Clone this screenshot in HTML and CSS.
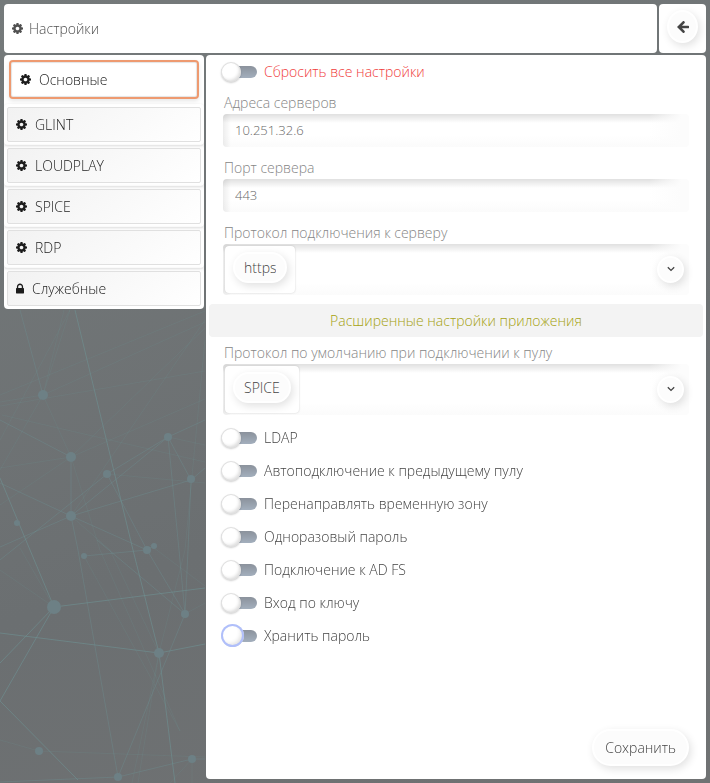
FILE: index.html
```html
<!DOCTYPE html>
<html lang="ru">
<head>
    <meta charset="UTF-8">
    <meta name="viewport" content="width=device-width, initial-scale=1.0">
    <title>Настройки</title>
    <link rel="stylesheet" href="styles.css">
</head>
<body>
    <!-- Network background -->
    <svg class="backdrop" viewBox="0 0 710 783" preserveAspectRatio="xMinYMin slice" aria-hidden="true">
        <g class="lines faint">
            <path d="M0 395L205 311M0 402L43 395L205 322M0 406L205 371M2 415L205 462M0 468L71 457L205 399M0 505L71 457L43 395L70 310M43 395L64 310M0 440L70 310M0 470L43 395M205 328L71 457L100 550L180 731M71 516L205 320M107 474L205 483M168 437L205 445M205 340L185 550L159 653L132 783M84 556L180 731M110 550L159 653M71 516L110 550M0 570L54 607M20 548L54 607M0 740L39 751L205 757M159 653L138 783M185 614L205 603M150 545L205 586M192 759L170 783M192 759L192 783"/>
        </g>
        <g class="lines">
            <path d="M20 310L43 395M0 420L71 457L71 516M78 550L118 777M71 516L78 550M0 483L71 516L191 480L205 468M71 516L168 437L205 420M71 516L147 550M71 516L0 547M97 540L185 614M107 474L147 550L185 614M84 556L147 550M153 546L147 550M0 560L107 474L168 437L191 480M168 437L179 550L185 614M191 480L188 550L185 614L118 777L192 759L205 759M118 777L0 782"/>
        </g>
        <g class="lines strong">
            <path d="M75 310L133 550L159 653L175 783M0 478L30 550L54 607L205 588M54 607L0 663M54 607L0 701L78 780M0 633L159 653L205 644"/>
        </g>
        <g class="nodes">
            <circle cx="43" cy="395" r="5"/>
            <circle cx="168" cy="437" r="4"/>
            <circle cx="71" cy="457" r="5"/>
            <circle cx="107" cy="474" r="4"/>
            <circle cx="191" cy="479" r="4"/>
            <circle cx="71" cy="516" r="5"/>
            <circle cx="17" cy="523" r="3"/>
            <circle cx="154" cy="546" r="3"/>
            <circle cx="147" cy="550" r="4"/>
            <circle cx="84" cy="556" r="3"/>
            <circle cx="54" cy="607" r="7"/>
            <circle cx="185" cy="614" r="4"/>
            <circle cx="159" cy="653" r="5"/>
            <circle cx="39" cy="751" r="4"/>
            <circle cx="192" cy="759" r="4"/>
            <circle cx="118" cy="777" r="4"/>
        </g>
    </svg>

    <!-- Shared icons -->
    <svg class="sprite" aria-hidden="true">
        <symbol id="gear" viewBox="0 0 1536 1536">
            <path d="M1024 768q0-106-75-181t-181-75-181 75-75 181 75 181 181 75 181-75 75-181zm512-109v222q0 12-8 23t-20 13l-185 28q-19 54-39 91 35 50 107 138 10 12 10 25t-9 23q-27 37-99 108t-94 71q-12 0-26-9l-138-108q-44 23-91 38-16 136-29 186-7 28-36 28h-222q-14 0-24.500-8.500t-11.500-21.500l-28-184q-49-16-90-37l-141 107q-10 9-25 9-14 0-25-11-126-114-165-168-7-10-7-23 0-12 8-23 15-21 51-66.500t54-70.500q-27-50-41-99l-183-27q-13-2-21-12.500t-8-23.500v-222q0-12 8-23t19-13l186-28q14-46 39-92-40-57-107-138-10-12-10-24 0-10 9-23 26-36 98.500-107.500t94.500-71.500q13 0 26 10l138 107q44-23 91-38 16-136 29-186 7-28 36-28h222q14 0 24.500 8.500t11.500 21.500l28 184q49 16 90 37l142-107q9-9 24-9 13 0 25 10 129 119 165 170 7 8 7 22 0 12-8 23-15 21-51 66.500t-54 70.500q26 50 41 98l183 28q13 2 21 12.500t8 23.500z"/>
        </symbol>
        <symbol id="lock" viewBox="0 0 1152 1408">
            <path d="M320 640h512v-192q0-106-75-181t-181-75-181 75-75 181v192zm832 96v576q0 40-28 68t-68 28h-960q-40 0-68-28t-28-68v-576q0-40 28-68t68-28h32v-192q0-184 132-316t316-132 316 132 132 316v192h32q40 0 68 28t28 68z"/>
        </symbol>
        <symbol id="arrow" viewBox="0 0 12 12">
            <path d="M6.500 1.300L1.800 6l4.700 4.700M2.200 6H11" fill="none" stroke="currentColor" stroke-width="2.600" stroke-linecap="round"/>
        </symbol>
        <symbol id="chevron" viewBox="0 0 8 6">
            <path d="M0.800 1.200L4 4.400l3.200-3.200" fill="none" stroke="currentColor" stroke-width="1.300"/>
        </symbol>
    </svg>

    <div class="app">
        <header class="topbar">
            <h1 class="title panel"><svg class="icon"><use href="#gear"/></svg>Настройки</h1>
            <div class="back panel">
                <button type="button" class="round-button back-button" aria-label="Назад"><svg class="icon"><use href="#arrow"/></svg></button>
            </div>
        </header>

        <div class="content">
            <nav class="menu panel">
                <div class="menu-cell active"><button type="button" class="menu-item"><svg class="icon"><use href="#gear"/></svg>Основные</button></div>
                <div class="menu-cell"><button type="button" class="menu-item"><svg class="icon"><use href="#gear"/></svg>GLINT</button></div>
                <div class="menu-cell"><button type="button" class="menu-item"><svg class="icon"><use href="#gear"/></svg>LOUDPLAY</button></div>
                <div class="menu-cell"><button type="button" class="menu-item"><svg class="icon"><use href="#gear"/></svg>SPICE</button></div>
                <div class="menu-cell"><button type="button" class="menu-item"><svg class="icon"><use href="#gear"/></svg>RDP</button></div>
                <div class="menu-cell"><button type="button" class="menu-item"><svg class="icon lock"><use href="#lock"/></svg>Служебные</button></div>
            </nav>

            <form class="settings panel">
                <label class="toggle danger"><input type="checkbox" class="switch">Сбросить все настройки</label>

                <div class="field">
                    <label for="hosts">Адреса серверов</label>
                    <input type="text" id="hosts" class="text-input" value="10.251.32.6">
                </div>
                <div class="field">
                    <label for="port">Порт сервера</label>
                    <input type="text" id="port" class="text-input" value="443">
                </div>
                <div class="field">
                    <label for="scheme">Протокол подключения к серверу</label>
                    <div class="picker">
                        <div class="chip">
                            <select id="scheme" class="pill">
                                <option>https</option>
                            </select>
                        </div>
                        <button type="button" class="round-button picker-button" aria-label="Открыть список"><svg class="icon"><use href="#chevron"/></svg></button>
                    </div>
                </div>

                <h2 class="section">Расширенные настройки приложения</h2>

                <div class="field">
                    <label for="protocol">Протокол по умолчанию при подключении к пулу</label>
                    <div class="picker">
                        <div class="chip">
                            <select id="protocol" class="pill">
                                <option>SPICE</option>
                            </select>
                        </div>
                        <button type="button" class="round-button picker-button" aria-label="Открыть список"><svg class="icon"><use href="#chevron"/></svg></button>
                    </div>
                </div>

                <label class="toggle"><input type="checkbox" class="switch">LDAP</label>
                <label class="toggle"><input type="checkbox" class="switch">Автоподключение к предыдущему пулу</label>
                <label class="toggle"><input type="checkbox" class="switch">Перенаправлять временную зону</label>
                <label class="toggle"><input type="checkbox" class="switch">Одноразовый пароль</label>
                <label class="toggle"><input type="checkbox" class="switch">Подключение к AD FS</label>
                <label class="toggle"><input type="checkbox" class="switch">Вход по ключу</label>
                <label class="toggle"><input type="checkbox" class="switch current">Хранить пароль</label>

                <button type="button" class="save-button">Сохранить</button>
            </form>
        </div>
    </div>
</body>
</html>
```

FILE: styles.css
```css
/* Reset */
* {
    box-sizing: border-box;
}

body {
    margin: 0;
    background: linear-gradient(160deg, #757a7b, #6b6f71 60%, #707273);
    color: #444;
    font-family: "Century Gothic", "Open Sans", sans-serif;
    font-size: 14px;
    font-weight: 300;
}

button, input, select {
    font: inherit;
    color: inherit;
}

button {
    cursor: pointer;
}

/* Background */
.backdrop {
    position: fixed;
    top: 0;
    left: 0;
    width: 100%;
    height: 100%;
    z-index: -1;
}

.lines {
    fill: none;
    stroke: #6f8f91;
    opacity: 0.4;
}

.lines.faint {
    opacity: 0.2;
}

.lines.strong {
    opacity: 0.65;
}

.nodes {
    fill: #6d8085;
}

.sprite {
    display: none;
}

.icon {
    width: 11px;
    height: 11px;
    flex: none;
    fill: currentColor;
}

/* Layout */
.app {
    display: flex;
    flex-direction: column;
    gap: 2px;
    min-height: 100vh;
    padding: 4px;
}

.panel {
    background: #fff;
    border-radius: 4px;
}

.topbar {
    display: flex;
    gap: 2px;
    height: 49px;
}

.title {
    flex: 1;
    display: flex;
    align-items: center;
    gap: 6px;
    margin: 0;
    padding: 0 8px;
    color: #505050;
    font-size: 14px;
    font-weight: 300;
}

.back {
    width: 47px;
    padding: 6px 8px;
}

.content {
    flex: 1;
    display: flex;
    align-items: flex-start;
    gap: 2px;
}

/* Menu */
.menu {
    width: 200px;
    overflow: hidden;
}

.menu-cell {
    padding: 3px;
    border-radius: 4px;
    box-shadow: 0 1px 3px rgba(0, 0, 0, 0.15);
}

.menu-item {
    display: flex;
    align-items: center;
    gap: 8px;
    width: 100%;
    height: 35px;
    padding: 0 8px 1px;
    border: 1px solid #e0e0e0;
    border-radius: 2px;
    background: linear-gradient(145deg, #f2f2f2, #fff);
    color: #1c1c1c;
}

.menu-cell.active {
    padding: 5px;
    box-shadow: none;
}

.active .menu-item {
    height: 39px;
    padding: 0 9px 1px;
    border: 2px solid #ee9a70;
    border-radius: 4px;
    background: #fff;
    box-shadow: inset 0 0 1px 1px #e4e4e4, 0 2px 4px rgba(0, 0, 0, 0.1);
}

.icon.lock {
    width: 8px;
}

/* Settings */
.settings {
    flex: 1;
    align-self: stretch;
    display: flex;
    flex-direction: column;
    padding: 0 17px 13px;
}

.toggle {
    display: flex;
    align-items: center;
    gap: 7px;
    height: 33px;
    margin-left: -2px;
}

.danger {
    color: #f03c3c;
}

.switch {
    appearance: none;
    display: flex;
    align-items: center;
    width: 36px;
    height: 12px;
    margin: 0;
    border-radius: 6px;
    background: linear-gradient(#8b929c, #a3afbd);
}

.switch::before {
    content: "";
    flex: none;
    width: 20px;
    height: 20px;
    border-radius: 50%;
    background: #fff;
    box-shadow: inset 0 0 0 1px #e0e0e0, inset -2px -2px 3px rgba(0, 0, 0, 0.12), 0 1px 2px rgba(0, 0, 0, 0.2);
}

.switch:checked::before {
    margin-left: 16px;
}

.switch.current::before {
    width: 23px;
    height: 23px;
    box-shadow: inset 0 0 0 2px #b0bffa, inset -3px -3px 4px rgba(0, 0, 0, 0.12);
}

.field {
    padding: 3px 0 6px;
}

.field label {
    display: block;
    color: #868686;
    line-height: 23px;
    padding-left: 1px;
}

.text-input,
.picker {
    border-radius: 4px;
    background:
        linear-gradient(to left, #fcfcfc 8px, rgba(252, 252, 252, 0) 40px),
        linear-gradient(to right, rgba(0, 0, 0, 0.07), transparent 8px),
        linear-gradient(to top, #fbfbfb, rgba(255, 255, 255, 0) 12px),
        linear-gradient(rgba(0, 0, 0, 0.12), transparent 9px),
        #fff;
}

.text-input {
    display: block;
    width: 100%;
    height: 33px;
    padding: 0 12px 2px;
    border: 0;
    color: #686868;
    font-size: 13px;
}

.picker {
    display: flex;
    align-items: center;
    justify-content: space-between;
    height: 51px;
    padding: 0 5px 1px 2px;
}

.chip {
    height: 47px;
    padding: 6px 8px;
    border-radius: 4px;
    background: #fff;
    box-shadow: 0 0 2px rgba(0, 0, 0, 0.2);
}

.pill {
    appearance: none;
    field-sizing: content;
    height: 31px;
    padding: 0 9px;
    border: 2px solid #fff;
    border-radius: 16px;
    background: #fcfcfc;
    box-shadow: 2px 3px 8px rgba(0, 0, 0, 0.12);
}

.round-button {
    display: flex;
    align-items: center;
    justify-content: center;
    padding: 0;
    border: 2px solid #fff;
    border-radius: 50%;
    background: #fcfcfc;
    box-shadow: 2px 3px 8px rgba(0, 0, 0, 0.12);
}

.back-button {
    width: 31px;
    height: 33px;
}

.back-button .icon {
    width: 12px;
    height: 12px;
}

.picker-button {
    width: 27px;
    height: 27px;
}

.picker-button .icon {
    width: 8px;
    height: 6px;
}

.section {
    margin: 3px -14px 1px;
    border-radius: 4px;
    background: #f3f3f3;
    color: #a5a210;
    font-size: 14px;
    font-weight: 300;
    line-height: 33px;
    text-align: center;
}

.save-button {
    align-self: flex-end;
    margin-top: auto;
    height: 37px;
    padding: 0 11px;
    border: 2px solid #fff;
    border-radius: 19px;
    background: #fcfcfc;
    box-shadow: 2px 3px 8px rgba(0, 0, 0, 0.12);
}
```
